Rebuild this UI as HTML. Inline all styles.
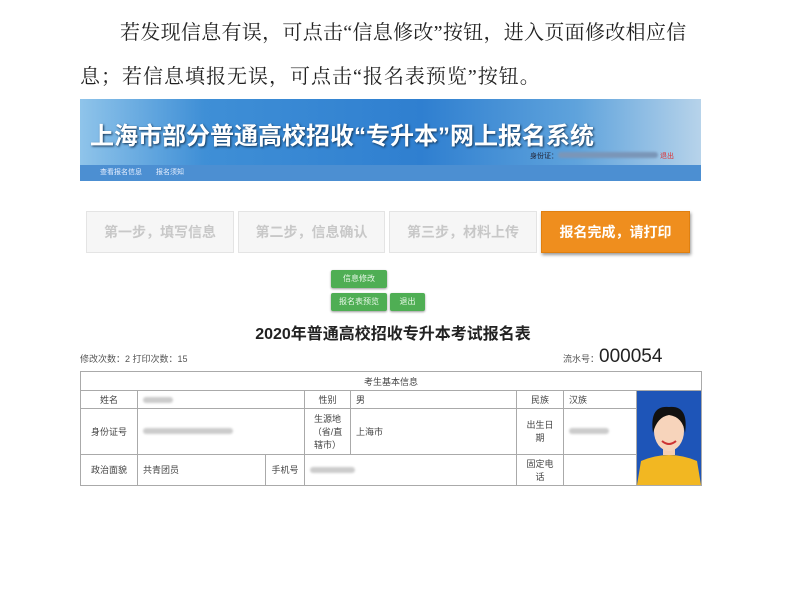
<!DOCTYPE html><html><head><meta charset="utf-8"><style>
body{margin:0;width:786px;height:602px;background:#fff;position:relative;overflow:hidden;font-family:"Liberation Sans","Noto Sans CJK SC",sans-serif}
.a{position:absolute}
.p{font-family:"Liberation Serif","Noto Serif CJK SC",serif;font-size:20px;letter-spacing:0.3px;color:#222;white-space:nowrap}
.step{position:absolute;top:211px;height:42px;background:#f6f6f6;border:1px solid #e4e4e4;box-sizing:border-box;color:#c8c8c8;font-size:14px;font-weight:bold;line-height:40px;text-align:center}
.g{position:absolute;background:#4fae54;border-radius:2px;color:#e8f8e8;font-size:8px;text-align:center;line-height:18px;box-shadow:0 1px 2px #999}
table{position:absolute;left:80px;top:371px;width:622px;height:113px;border-collapse:collapse;font-size:9px;color:#444}
td{border:1px solid #aaa;padding:0 5px}
.c{text-align:center}
.bl{display:inline-block;height:6px;background:#ccc;border-radius:3px;filter:blur(1px)}
</style></head><body>
<div class="a p" style="left:120px;top:16px">若发现信息有误，可点击“信息修改”按钮，进入页面修改相应信</div>
<div class="a p" style="left:80px;top:60px;letter-spacing:1px">息；若信息填报无误，可点击“报名表预览”按钮。</div>
<div class="a" style="left:80px;top:99px;width:621px;height:66px;background:linear-gradient(90deg,#8fc4ea 0%,#3f8fd6 20%,#2f7fd0 55%,#5fa3dc 80%,#b7d3ea 100%)">
<div class="a" style="left:10px;top:17px;color:#fff;font-size:24px;font-weight:bold;text-shadow:1px 1px 2px #135;white-space:nowrap">上海市部分普通高校招收“专升本”网上报名系统</div>
<div class="a" style="left:450px;top:52px;font-size:7px;color:#223">身份证：<span class="bl" style="width:100px;background:#7a96b8"></span> <span style="color:#d33">退出</span></div>
</div>
<div class="a" style="left:80px;top:165px;width:621px;height:16px;background:#4c8fd2;font-size:7px;color:#e8f0ff;line-height:16px"><span style="margin-left:20px">查看报名信息</span><span style="margin-left:14px">报名须知</span></div>
<div class="step" style="left:86px;width:148px">第一步，填写信息</div>
<div class="step" style="left:238px;width:147px">第二步，信息确认</div>
<div class="step" style="left:389px;width:148px">第三步，材料上传</div>
<div class="step" style="left:541px;width:149px;background:#ef8e1e;border-color:#e08010;color:#fff;box-shadow:1px 2px 3px #999">报名完成，请打印</div>
<div class="g" style="left:331px;top:270px;width:56px">信息修改</div>
<div class="g" style="left:331px;top:293px;width:56px">报名表预览</div>
<div class="g" style="left:390px;top:293px;width:35px">退出</div>
<div class="a" style="left:0;width:786px;top:320px;text-align:center;font-size:16px;font-weight:bold;color:#222">2020年普通高校招收专升本考试报名表</div>
<div class="a" style="left:80px;top:352px;font-size:9px;color:#555">修改次数：2 打印次数：15</div>
<div class="a" style="left:563px;top:346px;font-size:9px;color:#555;white-space:nowrap">流水号：<span style="font-size:19px;color:#222">000054</span></div>
<table>
<tr style="height:19px"><td colspan="9" class="c">考生基本信息</td></tr>
<tr style="height:18px"><td class="c" style="width:46px">姓名</td><td colspan="2"><span class="bl" style="width:30px"></span></td><td class="c" style="width:35px">性别</td><td colspan="2">男</td><td class="c" style="width:36px">民族</td><td style="width:62px">汉族</td><td rowspan="3" style="width:62px;padding:0;background:#1a4fb0;position:relative;overflow:hidden">
<svg width="64" height="94" viewBox="0 0 64 94" style="display:block"><rect width="64" height="94" fill="#1e55b8"/><path d="M0 94 L4 70 Q32 58 60 70 L64 94Z" fill="#f2b722"/><rect x="26" y="52" width="12" height="12" fill="#f5cdb0"/><ellipse cx="32" cy="40" rx="15" ry="20" fill="#f7d4bb"/><path d="M16 42 Q12 14 32 16 Q52 14 48 42 Q46 26 32 24 Q20 26 16 42Z" fill="#111"/><path d="M25 50 Q32 56 39 50" stroke="#c33" stroke-width="2" fill="none"/></svg></td></tr>
<tr style="height:45px"><td class="c">身份证号</td><td colspan="2"><span class="bl" style="width:90px"></span></td><td class="c">生源地<br>（省/直<br>辖市）</td><td colspan="2">上海市</td><td class="c">出生日<br>期</td><td><span class="bl" style="width:40px"></span></td></tr>
<tr style="height:31px"><td class="c">政治面貌</td><td style="width:117px">共青团员</td><td class="c" style="width:28px">手机号</td><td colspan="3"><span class="bl" style="width:45px"></span></td><td class="c">固定电<br>话</td><td></td></tr>
</table>
</body></html>
